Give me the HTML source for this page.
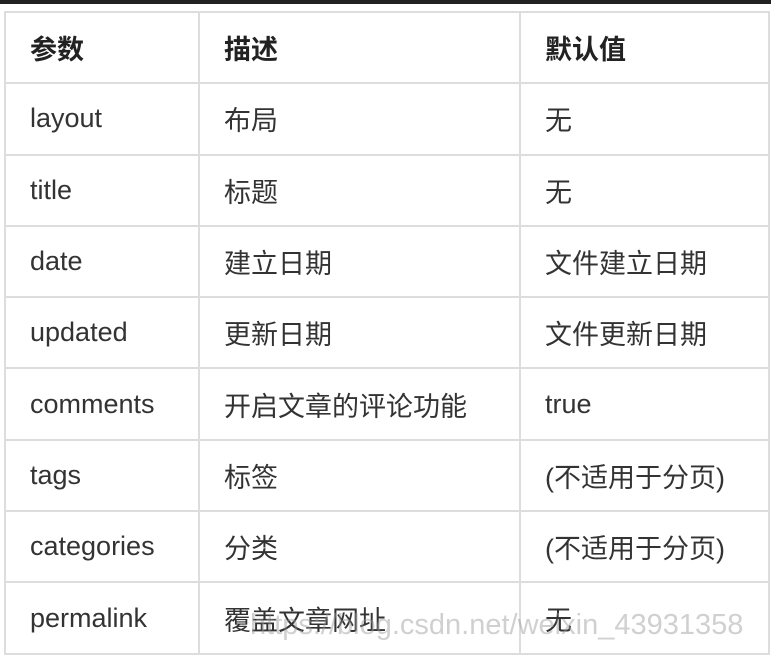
<!DOCTYPE html>
<html><head><meta charset="utf-8"><style>
body{margin:0;width:771px;height:654px;background:#fff;position:relative;overflow:hidden;font-family:"Liberation Sans","Noto Sans CJK SC",sans-serif;color:#333}
.bar{position:absolute;left:0;top:0;width:771px;height:4px;background:#222}
table{position:absolute;left:4px;top:11px;border-collapse:collapse;}
td{border:2px solid #ddd;height:71.3px;padding:0 0 0 24px;font-size:27px;vertical-align:middle;box-sizing:border-box}
tr:first-child td{font-weight:bold;color:#222}
.wm{position:absolute;left:250px;top:609px;font-size:29px;color:rgba(150,150,150,.45);white-space:nowrap}
</style></head><body>
<div class="bar"></div>
<table>
<colgroup><col style="width:194px"><col style="width:321px"><col style="width:249px"></colgroup>
<tr><td>参数</td><td>描述</td><td>默认值</td></tr>
<tr><td>layout</td><td>布局</td><td>无</td></tr>
<tr><td>title</td><td>标题</td><td>无</td></tr>
<tr><td>date</td><td>建立日期</td><td>文件建立日期</td></tr>
<tr><td>updated</td><td>更新日期</td><td>文件更新日期</td></tr>
<tr><td>comments</td><td>开启文章的评论功能</td><td>true</td></tr>
<tr><td>tags</td><td>标签</td><td>(不适用于分页)</td></tr>
<tr><td>categories</td><td>分类</td><td>(不适用于分页)</td></tr>
<tr><td>permalink</td><td>覆盖文章网址</td><td>无</td></tr>
</table>
<div class="wm">https://blog.csdn.net/weixin_43931358</div>
</body></html>
